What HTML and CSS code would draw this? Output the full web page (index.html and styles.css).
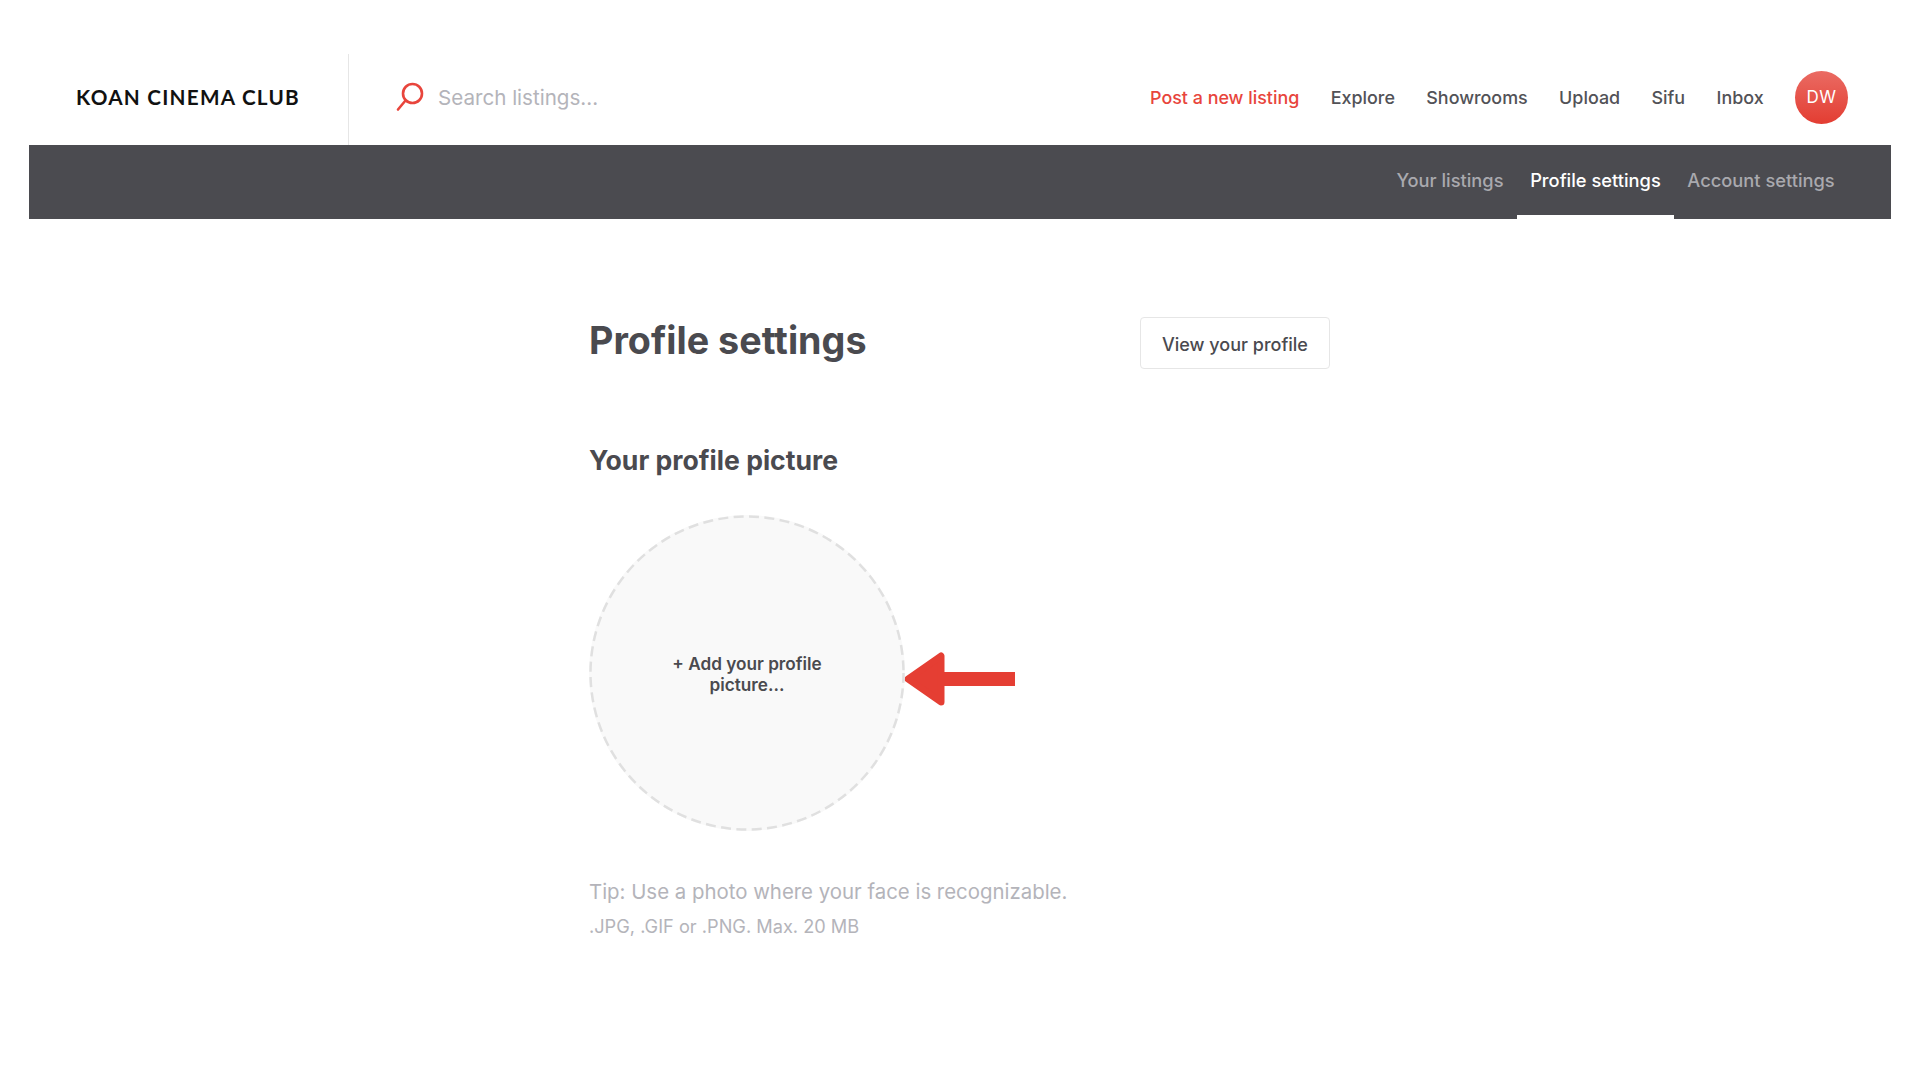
FILE: index.html
```html
<!doctype html>
<html lang="en">
<head>
  <meta charset="UTF-8" />
  <title>Profile settings - Koan Cinema Club</title>
  <link rel="stylesheet" href="styles.css">
</head>
<body>

  <header class="topbar">
    <div class="logo-cell">
      <span class="logo">KOAN CINEMA CLUB</span>
    </div>
    <div class="search">
      <svg class="search-icon" width="28" height="30" viewBox="0 0 28 30" fill="none" stroke="#e8453c" stroke-width="2.6" stroke-linecap="round">
        <circle cx="16.5" cy="11.5" r="9.5" />
        <path d="M9.5 18.5 L2 27.5" />
      </svg>
      <span class="search-text">Search listings...</span>
    </div>
    <nav class="main-nav">
      <a class="nav-link post">Post a new listing</a>
      <a class="nav-link">Explore</a>
      <a class="nav-link">Showrooms</a>
      <a class="nav-link">Upload</a>
      <a class="nav-link">Sifu</a>
      <a class="nav-link">Inbox</a>
      <span class="avatar">DW</span>
    </nav>
  </header>

  <div class="subbar">
    <a class="tab">Your listings</a>
    <a class="tab active">Profile settings</a>
    <a class="tab">Account settings</a>
  </div>

  <main class="content">
    <div class="title-row">
      <h1>Profile settings</h1>
      <a class="profile-btn">View your profile</a>
    </div>

    <h2>Your profile picture</h2>

    <div class="picture-row">
      <div class="picture-drop">
        <svg class="drop-ring" width="316" height="316" viewBox="0 0 316 316" fill="none">
          <circle cx="158" cy="158" r="156.5" stroke="#e0e0e0" stroke-width="2.5" stroke-dasharray="10 5.4" />
        </svg>
        <span>+ Add your profile picture...</span>
      </div>
      <svg class="arrow" width="112" height="54" viewBox="0 0 112 54">
        <path d="M4 27 L37 4 L37 50 Z" fill="#e53e33" stroke="#e53e33" stroke-width="7" stroke-linejoin="round" />
        <rect x="38" y="20" width="73" height="14" fill="#e53e33" />
      </svg>
    </div>

    <p class="tip">Tip: Use a photo where your face is recognizable.</p>
    <p class="tip-small">.JPG, .GIF or .PNG. Max. 20 MB</p>
  </main>

</body>
</html>
```

FILE: styles.css
```css
body {
  margin: 0;
  padding: 54px 29px 0;
  background: #fff;
  color: #4a4a4f;
  font-family: Inter, "Liberation Sans", sans-serif;
}

a {
  color: inherit;
  text-decoration: none;
}

.topbar {
  display: flex;
  align-items: center;
  height: 91px;
}

.logo-cell {
  display: flex;
  align-items: center;
  box-sizing: border-box;
  width: 320px;
  height: 100%;
  padding: 0 0 5px 47px;
  border-right: 1px solid #e6e6e6;
}

.logo {
  font-family: Lato, sans-serif;
  font-weight: 700;
  font-size: 20.7px;
  letter-spacing: 1.25px;
  color: #111;
  white-space: nowrap;
}

.search {
  display: flex;
  align-items: center;
  gap: 14px;
  padding: 0 0 5px 47px;
}

.search-text {
  font-size: 20.6px;
  color: #b4b4ba;
}

.main-nav {
  display: flex;
  align-items: center;
  gap: 31.4px;
  margin-left: auto;
  padding: 0 43px 5px 0;
}

.nav-link {
  font-size: 17.9px;
  font-weight: 500;
  color: #525257;
}

.nav-link.post {
  color: #e8453c;
}

.avatar {
  display: flex;
  align-items: center;
  justify-content: center;
  width: 53px;
  height: 53px;
  border-radius: 50%;
  background: linear-gradient(#ea6b63, #e33d32);
  color: #fff;
  font-size: 17px;
  font-weight: 400;
  letter-spacing: 0.5px;
}

.subbar {
  display: flex;
  justify-content: flex-end;
  height: 74px;
  padding-right: 43px;
  background: #4b4b50;
}

.tab {
  display: flex;
  align-items: center;
  height: 69px;
  padding: 0 13.3px 1px;
  font-size: 18.3px;
  font-weight: 500;
  color: #a9a9ae;
}

.tab.active {
  color: #fff;
  border-bottom: 4px solid #fff;
}

.content {
  padding: 98px 0 0 560px;
}

.title-row {
  display: flex;
  align-items: center;
  justify-content: space-between;
  width: 741px;
}

h1 {
  margin: 0;
  padding-bottom: 6px;
  font-size: 37.7px;
  font-weight: 700;
}

.profile-btn {
  display: flex;
  align-items: center;
  justify-content: center;
  box-sizing: border-box;
  width: 190px;
  height: 52px;
  padding-top: 2px;
  border: 1px solid #e6e6e6;
  border-radius: 4px;
  font-size: 18px;
  font-weight: 500;
}

h2 {
  margin: 72.6px 0 0;
  font-size: 26.6px;
  line-height: 36px;
  font-weight: 700;
}

.picture-row {
  display: flex;
  align-items: center;
  margin-top: 37.5px;
}

.picture-drop {
  position: relative;
  display: flex;
  align-items: center;
  justify-content: center;
  box-sizing: border-box;
  width: 316px;
  height: 316px;
  padding: 1px 80px 0;
  border-radius: 50%;
  background: #f9f9f9;
  font-size: 17.2px;
  line-height: 21px;
  font-weight: 600;
  text-align: center;
}

.drop-ring {
  position: absolute;
  top: 0;
  left: 0;
}

.arrow {
  margin-left: -1px;
  margin-top: 11px;
}

.tip {
  margin: 48px 0 0;
  font-size: 20.4px;
  line-height: 26px;
  color: #b4b4ba;
}

.tip-small {
  margin: 10px 0 0;
  font-size: 18.2px;
  line-height: 22px;
  color: #b4b4ba;
}
```
